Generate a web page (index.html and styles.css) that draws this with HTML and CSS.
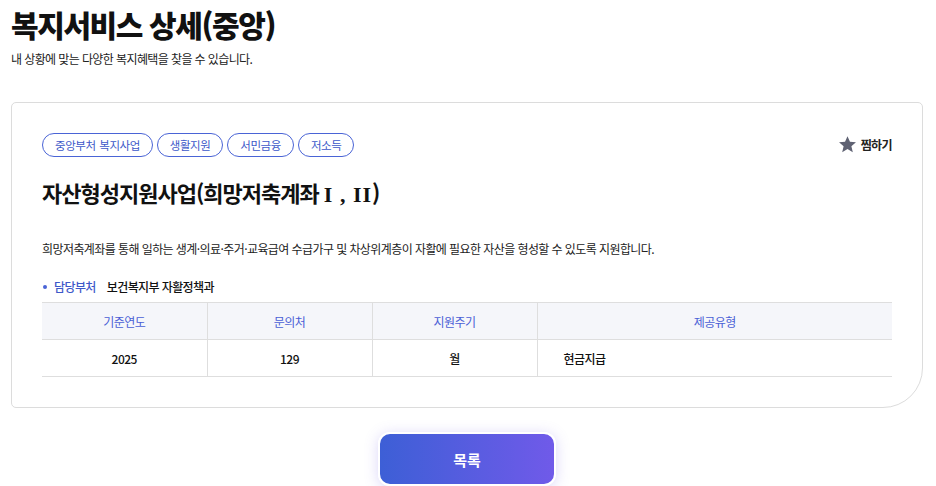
FILE: index.html
```html
<!DOCTYPE html>
<html lang="ko">
<head>
<meta charset="utf-8">
<link rel="stylesheet" href="styles.css">
</head>
<body>
<div class="page">
  <h1 class="page-title">복지서비스 상세(중앙)</h1>
  <p class="page-sub">내 상황에 맞는 다양한 복지혜택을 찾을 수 있습니다.</p>

  <section class="card">
    <div class="card-top">
      <div class="tags">
        <span class="tag">중앙부처 복지사업</span>
        <span class="tag">생활지원</span>
        <span class="tag">서민금융</span>
        <span class="tag">저소득</span>
      </div>
      <button class="fav">
        <svg class="star" viewBox="0 0 24 24" width="19" height="19"><path d="M12 1.5l3.1 7.1 7.6.6-5.8 5 1.8 7.5L12 17.7l-6.7 4 1.8-7.5-5.8-5 7.6-.6z" fill="#5f6273"/></svg>
        <span>찜하기</span>
      </button>
    </div>
    <h2 class="svc-title">자산형성지원사업(희망저축계좌 <span class="roman">I , II</span>)</h2>
    <p class="svc-desc">희망저축계좌를 통해 일하는 생계·의료·주거·교육급여 수급가구 및 차상위계층이 자활에 필요한 자산을 형성할 수 있도록 지원합니다.</p>
    <div class="dept"><span class="dot"></span><span class="dept-label">담당부처</span><span class="dept-value">보건복지부 자활정책과</span></div>
    <table class="info">
      <thead>
        <tr><th class="c1">기준연도</th><th class="c2">문의처</th><th class="c3">지원주기</th><th class="c4">제공유형</th></tr>
      </thead>
      <tbody>
        <tr><td>2025</td><td>129</td><td>월</td><td class="left">현금지급</td></tr>
      </tbody>
    </table>
  </section>

  <div class="actions">
    <button class="btn-list">목록</button>
  </div>
</div>
</body>
</html>
```

FILE: styles.css
```css
* { box-sizing: border-box; }
html, body { margin: 0; padding: 0; background: #fff; }
body {
  font-family: "Noto Sans CJK KR", "Noto Sans", sans-serif;
  color: #111;
  overflow: hidden;
}
.page { padding: 0 13px 0 11px; }
.page-title {
  margin: 0;
  padding-top: 2px;
  font-size: 30px;
  font-weight: 900;
  line-height: 44px;
  letter-spacing: -1.4px;
  color: #111;
}
.page-sub {
  margin: 4px 0 0;
  font-size: 12px;
  line-height: 18px;
  color: #222;
  letter-spacing: -0.6px;
}
.card {
  margin-top: 34px;
  border: 1px solid #dcdcdc;
  border-radius: 5px 5px 40px 5px;
  padding: 30px 30px 30px 30px;
  height: 306px;
}
.card-top {
  display: flex;
  justify-content: space-between;
  align-items: center;
}
.tags { display: flex; gap: 4px; }
.tag {
  display: inline-flex;
  align-items: center;
  height: 24px;
  padding: 0 12px;
  border: 1px solid #4a64d6;
  border-radius: 12px;
  font-size: 11.5px;
  color: #3d58c9;
  letter-spacing: -0.45px;
  word-spacing: 1px;
}
.fav {
  display: flex;
  align-items: center;
  gap: 4px;
  border: 0;
  background: none;
  padding: 0;
  margin-top: -2px;
  font-family: inherit;
  font-size: 12px;
  font-weight: 700;
  color: #222;
  letter-spacing: -0.6px;
  cursor: pointer;
}
.svc-title {
  margin: 19px 0 0;
  font-size: 22px;
  font-weight: 700;
  line-height: 32px;
  letter-spacing: -1px;
  color: #111;
}
.roman {
  font-family: "Liberation Serif", serif;
  font-weight: 700;
  letter-spacing: 1px;
  word-spacing: 0;
}
.svc-desc {
  margin: 29px 0 0;
  font-size: 12px;
  line-height: 18px;
  color: #222;
  letter-spacing: -0.58px;
}
.dept {
  margin-top: 20px;
  display: flex;
  align-items: center;
  font-size: 12px;
  line-height: 18px;
  letter-spacing: -0.6px;
}
.dot {
  width: 4px; height: 4px;
  border-radius: 50%;
  background: #4a64d6;
  margin: 0 7px 0 1px;
}
.dept-label { color: #3d58c9; font-weight: 500; margin-right: 11px; }
.dept-value { color: #111; font-weight: 500; }
.info {
  margin-top: 6px;
  width: 100%;
  border-collapse: collapse;
  font-size: 12px;
  letter-spacing: -0.5px;
}
.info th, .info td {
  height: 37px;
  border-top: 1px solid #dedede;
  border-bottom: 1px solid #dedede;
  text-align: center;
  padding: 0;
}
.info th + th, .info td + td { border-left: 1px solid #dedede; }
.info th { background: #f5f6fa; color: #4a5fd6; font-weight: 400; }
.info td { color: #111; font-weight: 500; }
.info .c1, .info .c2, .info .c3 { width: 165px; }
.info td.left { text-align: left; padding-left: 26px; }
.actions {
  display: flex;
  justify-content: center;
  margin-top: 24px;
  padding-right: 0;
}
.btn-list {
  width: 178px;
  height: 54px;
  border: 2px solid #fff;
  border-radius: 12px;
  background: linear-gradient(90deg, #3d5fd6, #705ae9);
  color: #fff;
  font-family: inherit;
  font-size: 15px;
  font-weight: 700;
  box-shadow: 0 2px 14px rgba(110, 90, 230, 0.25);
  cursor: pointer;
}
```
